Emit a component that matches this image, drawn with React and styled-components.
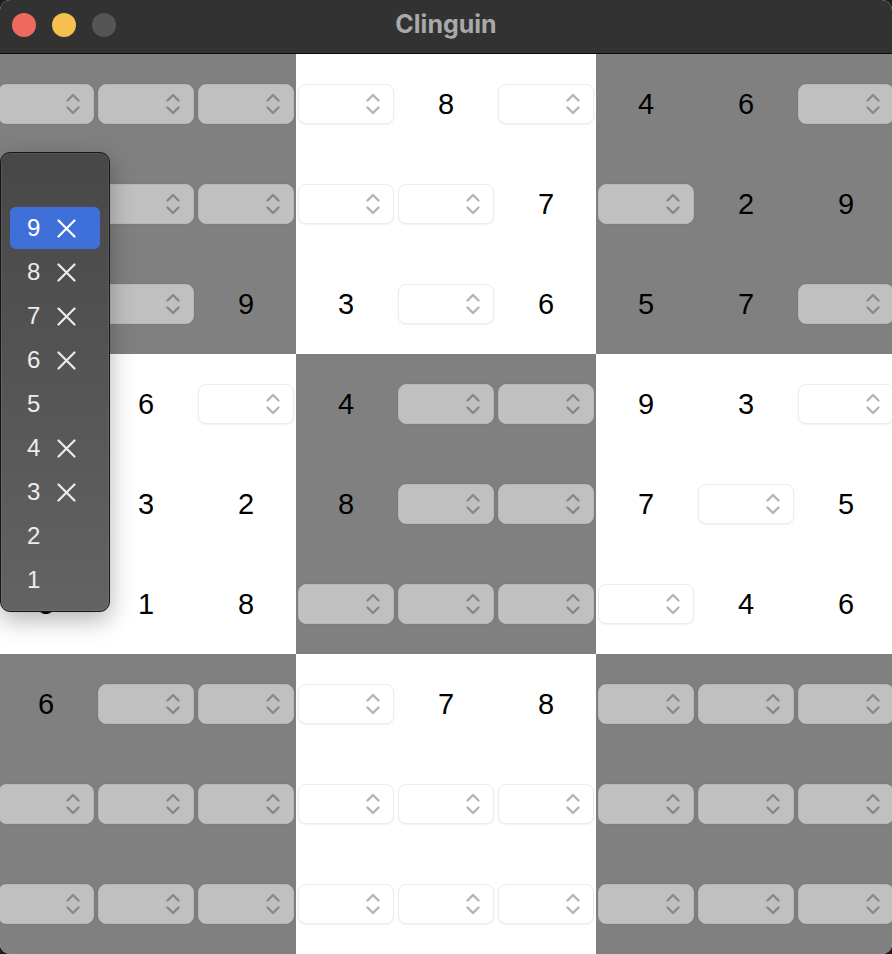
import React from 'react';
import styled, { createGlobalStyle } from 'styled-components';

const board = [
  ['', '', '', '', '8', '', '4', '6', ''],
  ['', '', '', '', '', '7', '', '2', '9'],
  ['', '', '9', '3', '', '6', '5', '7', ''],
  ['', '6', '', '4', '', '', '9', '3', ''],
  ['', '3', '2', '8', '', '', '7', '', '5'],
  ['5', '1', '8', '', '', '', '', '4', '6'],
  ['6', '', '', '', '7', '8', '', '', ''],
  ['', '', '', '', '', '', '', '', ''],
  ['', '', '', '', '', '', '', '', ''],
];

const menuItems = [
  { label: '', crossed: false },
  { label: '9', crossed: true },
  { label: '8', crossed: true },
  { label: '7', crossed: true },
  { label: '6', crossed: true },
  { label: '5', crossed: false },
  { label: '4', crossed: true },
  { label: '3', crossed: true },
  { label: '2', crossed: false },
  { label: '1', crossed: false },
];

const isDarkBox = (r, c) => (Math.floor(r / 3) + Math.floor(c / 3)) % 2 === 0;

const Chevrons = () => (
  <svg width="14" height="22" viewBox="0 0 14 22" fill="none">
    <path d="M1.5 7.5 L7 2 L12.5 7.5" stroke="currentColor" strokeWidth="2.4" strokeLinecap="round" strokeLinejoin="round" />
    <path d="M1.5 14.5 L7 20 L12.5 14.5" stroke="currentColor" strokeWidth="2.4" strokeLinecap="round" strokeLinejoin="round" />
  </svg>
);

const Cross = () => (
  <svg width="19" height="19" viewBox="0 0 19 19" fill="none">
    <path d="M1.5 1.5 L17.5 17.5 M17.5 1.5 L1.5 17.5" stroke="currentColor" strokeWidth="2.2" strokeLinecap="round" />
  </svg>
);

const App = () => {
  return (
    <>
      <GlobalStyle />
      <Window>
        <TitleBar>
          <Lights>
            <Light color="#ee6a5f" />
            <Light color="#f5c04f" />
            <Light color="#555555" />
          </Lights>
          <Title>Clinguin</Title>
        </TitleBar>
        <Board>
          {board.map((row, r) =>
            row.map((value, c) => (
              <Cell key={`${r}-${c}`} dark={isDarkBox(r, c)}>
                {value ? (
                  <Digit>{value}</Digit>
                ) : (
                  <Select dark={isDarkBox(r, c)}>
                    <Chevrons />
                  </Select>
                )}
              </Cell>
            ))
          )}
        </Board>
        <Menu>
          {menuItems.map((item, i) => (
            <MenuItem key={i} active={i === 1}>
              <span>{item.label}</span>
              {item.crossed && <Cross />}
            </MenuItem>
          ))}
        </Menu>
      </Window>
    </>
  );
};

export default App;

// styles

const GlobalStyle = createGlobalStyle`
  html, body {
    margin: 0;
    padding: 0;
    background: #1e1e1e;
    overflow: hidden;
  }
  body {
    font-family: "Liberation Sans", Arial, sans-serif;
  }
`;

const Window = styled.div`
  position: relative;
  width: 892px;
  height: 954px;
  overflow: hidden;
  border-radius: 10px;
  background: #ffffff;
`;

const TitleBar = styled.div`
  height: 54px;
  box-sizing: border-box;
  padding-bottom: 6px;
  background: #323232;
  border-bottom: 1px solid #0a0a0a;
  display: flex;
  align-items: center;
  justify-content: center;
  position: relative;
`;

const Lights = styled.div`
  position: absolute;
  left: 12px;
  top: 13px;
  display: flex;
  gap: 16px;
`;

const Light = styled.div`
  width: 24px;
  height: 24px;
  border-radius: 50%;
  background: ${(p) => p.color};
`;

const Title = styled.div`
  color: #a9a9a9;
  font-size: 25px;
  font-weight: bold;
  font-family: "Inter", "Liberation Sans", sans-serif;
`;

const Board = styled.div`
  display: grid;
  grid-template-columns: repeat(9, 100px);
  grid-template-rows: repeat(9, 100px);
  margin-left: -4px;
  width: 900px;
`;

const Cell = styled.div`
  background: ${(p) => (p.dark ? '#808080' : '#ffffff')};
  display: flex;
  align-items: center;
  justify-content: center;
`;

const Digit = styled.div`
  font-size: 29px;
  color: #000;
  font-family: "Liberation Sans", Arial, sans-serif;
`;

const Select = styled.div`
  width: 96px;
  height: 40px;
  margin-top: -1px;
  box-sizing: border-box;
  border-radius: 8px;
  display: flex;
  align-items: center;
  justify-content: flex-end;
  padding-right: 13px;
  background: ${(p) => (p.dark ? '#c0c0c0' : '#ffffff')};
  color: ${(p) => (p.dark ? '#878787' : '#b4b4b4')};
  border: 1px solid ${(p) => (p.dark ? '#b8b8b8' : '#ececec')};
  box-shadow: ${(p) => (p.dark ? '0 0 2px rgba(0,0,0,0.12)' : '0 1px 2px rgba(0,0,0,0.06)')};
`;

const Menu = styled.div`
  position: absolute;
  left: 0;
  top: 152px;
  width: 110px;
  height: 460px;
  box-sizing: border-box;
  padding: 9px 9px;
  border-radius: 10px;
  border: 1px solid #151515;
  background: linear-gradient(#474747, #636363);
  box-shadow: 0 0 0 1px rgba(255,255,255,0.08) inset, 0 8px 24px rgba(0,0,0,0.3);
  display: flex;
  flex-direction: column;
  z-index: 2;
`;

const MenuItem = styled.div`
  height: 44px;
  display: flex;
  align-items: center;
  gap: 16px;
  padding-left: 17px;
  border-radius: 6px;
  border-top: 1px solid transparent;
  border-bottom: 1px solid transparent;
  background-clip: padding-box;
  color: #ececec;
  font-size: 24px;
  font-family: "Liberation Sans", Arial, sans-serif;
  background-color: ${(p) => (p.active ? '#3f70d9' : 'transparent')};
  ${(p) => p.active && 'color: #ffffff;'}
  span {
    width: 14px;
  }
`;
